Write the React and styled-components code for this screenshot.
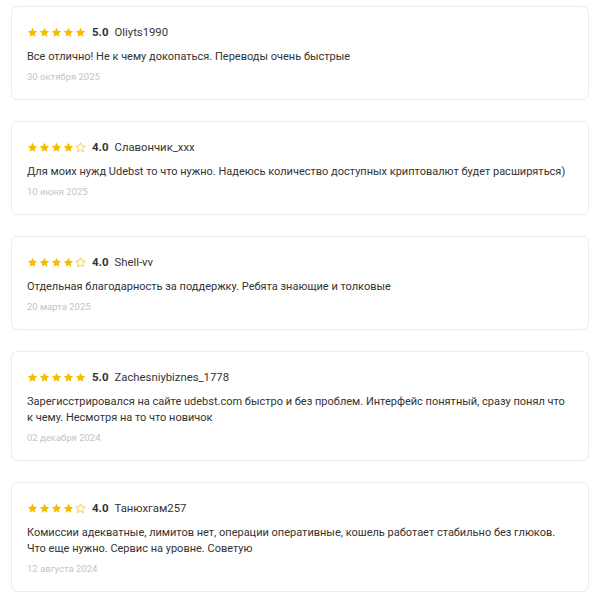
import React from "react";
import styled, { createGlobalStyle } from "styled-components";

const Global = createGlobalStyle`
  html, body { margin: 0; padding: 0; background: #ffffff; }
  body { font-family: Roboto, "Noto Sans", Arial, sans-serif; }
`;

const List = styled.div`
  display: flex;
  flex-direction: column;
  gap: 21px;
  padding: 6px 7px 0 11px;
`;

const Card = styled.div`
  border: 1px solid #ededed;
  border-radius: 6px;
  padding: 15px 15px 13px 15px;
  background: #fff;
  box-shadow: 0 0 2px rgba(0,0,0,0.03);
`;

const Header = styled.div`
  display: flex;
  align-items: center;
  height: 20px;
`;

const Stars = styled.div`
  display: flex;
  gap: 1px;
  margin-right: 6px;
`;

const Score = styled.span`
  font-size: 11.5px;
  font-weight: 700;
  color: #333;
  margin-right: 6px;
`;

const Name = styled.span`
  font-size: 11.3px;
  color: #333;
`;

const Text = styled.div`
  margin-top: 7px;
  font-size: 11px;
  line-height: 16px;
  color: #333;
`;

const DateLine = styled.div`
  margin-top: 3px;
  font-size: 9.5px;
  line-height: 18px;
  color: #c4c4c4;
`;

const Star = ({ filled }) => (
  <svg width="11" height="11" viewBox="0 0 24 24">
    <path
      d="M12 1.8l3.1 6.5 7.1.9-5.2 4.9 1.4 7.1L12 17.6l-6.4 3.6 1.4-7.1-5.2-4.9 7.1-.9z"
      fill={filled ? "#F5BD02" : "none"}
      stroke="#F5BD02"
      strokeWidth={filled ? 0 : 1.6}
      strokeLinejoin="round"
    />
  </svg>
);

const reviews = [
  { r: 5, name: "Oliyts1990", text: "Все отлично! Не к чему докопаться. Переводы очень быстрые", date: "30 октября 2025" },
  { r: 4, name: "Славончик_xxx", text: "Для моих нужд Udebst то что нужно. Надеюсь количество доступных криптовалют будет расширяться)", date: "10 июня 2025" },
  { r: 4, name: "Shell-vv", text: "Отдельная благодарность за поддержку. Ребята знающие и толковые", date: "20 марта 2025" },
  { r: 5, name: "Zachesniybiznes_1778", text: "Зарегисстрировался на сайте udebst.com быстро и без проблем. Интерфейс понятный, сразу понял что к чему. Несмотря на то что новичок", date: "02 декабря 2024" },
  { r: 4, name: "Танюхгам257", text: "Комиссии адекватные, лимитов нет, операции оперативные, кошель работает стабильно без глюков. Что еще нужно. Сервис на уровне. Советую", date: "12 августа 2024" },
];

export default function App() {
  return (
    <>
      <Global />
      <List>
        {reviews.map((rv, i) => (
          <Card key={i}>
            <Header>
              <Stars>
                {[0, 1, 2, 3, 4].map((k) => (
                  <Star key={k} filled={k < rv.r} />
                ))}
              </Stars>
              <Score>{rv.r.toFixed(1)}</Score>
              <Name>{rv.name}</Name>
            </Header>
            <Text>{rv.text}</Text>
            <DateLine>{rv.date}</DateLine>
          </Card>
        ))}
      </List>
    </>
  );
}
